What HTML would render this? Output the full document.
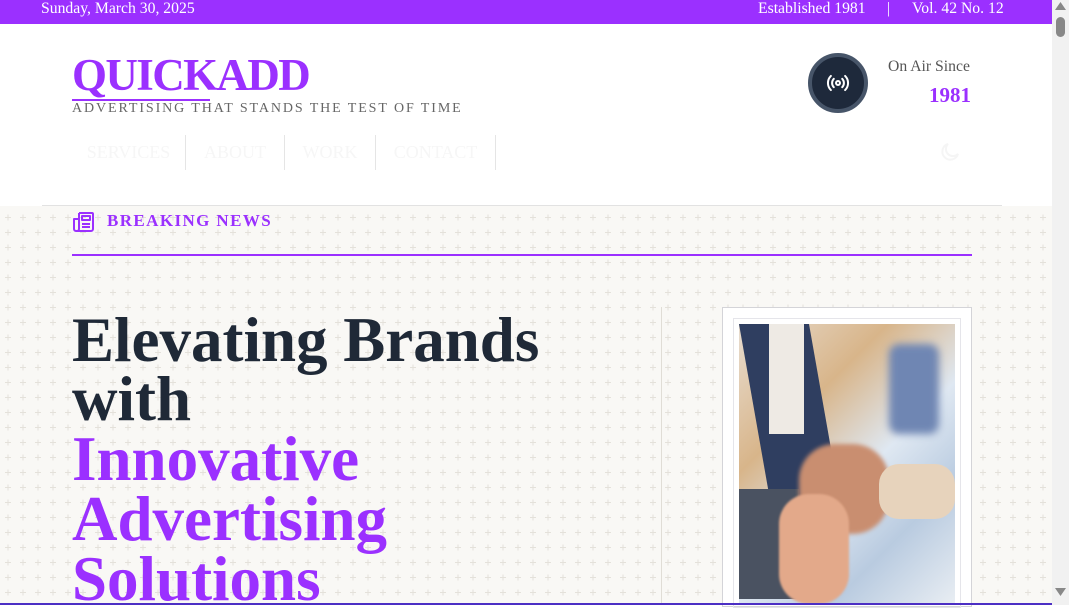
<!DOCTYPE html>
<html><head><meta charset="utf-8"><style>
*{margin:0;padding:0;box-sizing:border-box}
html,body{width:1069px;height:605px;overflow:hidden;background:#fff;font-family:"Liberation Serif",serif}
.top{position:absolute;left:0;top:0;width:1052px;height:24px;background:#9b30ff;color:#fff;font-size:15.7px}
.top span{position:absolute;top:0;line-height:17px}
.sb{position:absolute;left:1052px;top:0;width:17px;height:605px;background:#f1f1f1}
.hdr{position:absolute;left:0;top:24px;width:1052px;height:182px;background:#fff}
.logo{position:absolute;left:72px;top:47px;font-size:45px;font-weight:bold;color:#9b30ff;letter-spacing:-1.6px;line-height:56px}
.ul{position:absolute;left:72px;top:99px;width:138px;height:2px;background:#9b30ff}
.tag{position:absolute;left:72px;top:101px;font-size:14px;color:#666;letter-spacing:1.9px;white-space:nowrap}
.nav{position:absolute;top:135px;height:35px;border-right:1px solid #e5e5e5;color:#f6f6f6;font-size:18px;line-height:35px;text-align:center}
.circ{position:absolute;left:808px;top:53px;width:60px;height:60px;border-radius:50%;background:#1e293b;border:4px solid #475569}
.pat{position:absolute;left:0;top:206px;width:1052px;height:399px;background:#f9f8f5}
.hl{position:absolute;left:72px;font-size:63px;font-weight:bold;line-height:60px;white-space:nowrap;letter-spacing:0px}
</style></head><body>
<div class="top"><span style="left:41px">Sunday, March 30, 2025</span><span style="left:758px">Established 1981</span><span style="left:887px">|</span><span style="left:912px">Vol. 42 No. 12</span></div>
<div class="hdr"></div>
<div class="logo">QUICKADD</div>
<div class="ul"></div>
<div class="tag">ADVERTISING THAT STANDS THE TEST OF TIME</div>
<div class="nav" style="left:72px;width:114px">SERVICES</div>
<div class="nav" style="left:186px;width:99px">ABOUT</div>
<div class="nav" style="left:285px;width:91px">WORK</div>
<div class="nav" style="left:376px;width:120px">CONTACT</div>
<svg style="position:absolute;left:938px;top:140px" width="24" height="24" viewBox="0 0 24 24" fill="none" stroke="#f5f5f5" stroke-width="2"><path d="M20 14A8 8 0 1 1 10 4a6 6 0 0 0 10 10z"/></svg>
<div class="circ"><svg style="position:absolute;left:14px;top:14px" width="24" height="24" viewBox="0 0 24 24" fill="none" stroke="#fff" stroke-width="2" stroke-linecap="round"><circle cx="12" cy="12" r="2"/><path d="M16.2 7.8a6 6 0 0 1 0 8.4M7.8 16.2a6 6 0 0 1 0-8.4M19.1 4.9a10 10 0 0 1 0 14.2M4.9 19.1a10 10 0 0 1 0-14.2"/></svg></div>
<div style="position:absolute;left:888px;top:58px;font-size:15.7px;color:#555">On Air Since</div>
<div style="position:absolute;right:98px;top:83px;font-size:21px;font-weight:bold;color:#9b30ff">1981</div>
<div class="pat"><svg width="1052" height="399" style="position:absolute;left:0;top:0"><defs><pattern id="p" x="0" y="4" width="15" height="15" patternUnits="userSpaceOnUse"><path d="M8 4.5v6M5 7.5h6" stroke="#e4e1da" stroke-width="1"/></pattern></defs><rect width="1052" height="399" fill="url(#p)"/></svg></div>
<div style="position:absolute;left:42px;top:205px;width:960px;height:1px;background:#e2e2e2"></div>
<svg style="position:absolute;left:72px;top:210px" width="24" height="24" viewBox="0 0 24 24" fill="none" stroke="#9b30ff" stroke-width="2" stroke-linejoin="round"><path d="M7 3h13a1 1 0 0 1 1 1v15a2 2 0 0 1-2 2H4a2 2 0 0 1-2-2V9h5"/><path d="M7 3v16a2 2 0 0 1-2 2M2 9v10"/><rect x="10" y="6" width="8" height="4"/><path d="M10 14h8M10 17h8"/></svg>
<div style="position:absolute;left:107px;top:211px;font-size:17px;font-weight:bold;color:#9b30ff;letter-spacing:1.4px">BREAKING NEWS</div>
<div style="position:absolute;left:72px;top:254px;width:900px;height:2px;background:#9b30ff"></div>
<div style="position:absolute;left:661px;top:307px;width:1px;height:298px;background:#e0ddd6"></div>
<div class="hl" style="top:310px;color:#1f2937">Elevating Brands</div>
<div class="hl" style="top:369px;color:#1f2937">with</div>
<div class="hl" style="top:429px;color:#9b30ff">Innovative</div>
<div class="hl" style="top:489px;color:#9b30ff">Advertising</div>
<div class="hl" style="top:549px;color:#9b30ff">Solutions</div>
<div style="position:absolute;left:722px;top:307px;width:250px;height:300px;background:#fff;border:1px solid #d4d4d8"></div>
<div style="position:absolute;left:733px;top:318px;width:228px;height:290px;border:1px solid #e5e5ea"></div>
<div style="position:absolute;left:739px;top:324px;width:216px;height:281px;overflow:hidden;background:linear-gradient(135deg,#e8ddd0 0%,#d8b58a 30%,#dfe8f2 55%,#b9cbe0 75%,#e9eef3 100%)">
<div style="position:absolute;left:0;top:0;width:70px;height:200px;background:#2f3e60;transform:skewX(10deg);transform-origin:top left"></div>
<div style="position:absolute;left:30px;top:0;width:35px;height:110px;background:#eeeae4"></div>
<div style="position:absolute;left:150px;top:20px;width:50px;height:90px;background:#6f86b3;border-radius:10px;filter:blur(4px)"></div>
<div style="position:absolute;left:0;top:165px;width:60px;height:110px;background:#4a5261"></div>
<div style="position:absolute;left:60px;top:120px;width:90px;height:90px;background:#c98e70;border-radius:40%;filter:blur(2px)"></div>
<div style="position:absolute;left:140px;top:140px;width:76px;height:55px;background:#e7d3bc;border-radius:20px"></div>
<div style="position:absolute;left:40px;top:170px;width:70px;height:110px;background:#e3a98a;border-radius:30px;filter:blur(1px)"></div>
</div>
<div class="sb"><div style="position:absolute;left:4px;top:17px;width:9px;height:20px;border-radius:5px;background:#888"></div>
<svg style="position:absolute;left:3px;top:2px" width="11" height="8"><path d="M5.5 0L11 8H0z" fill="#888"/></svg>
<svg style="position:absolute;left:3px;top:588px" width="11" height="8"><path d="M0 0h11L5.5 8z" fill="#888"/></svg></div>
<div style="position:absolute;left:0;top:603px;width:1052px;height:2px;background:#4c2fc4"></div>
</body></html>
